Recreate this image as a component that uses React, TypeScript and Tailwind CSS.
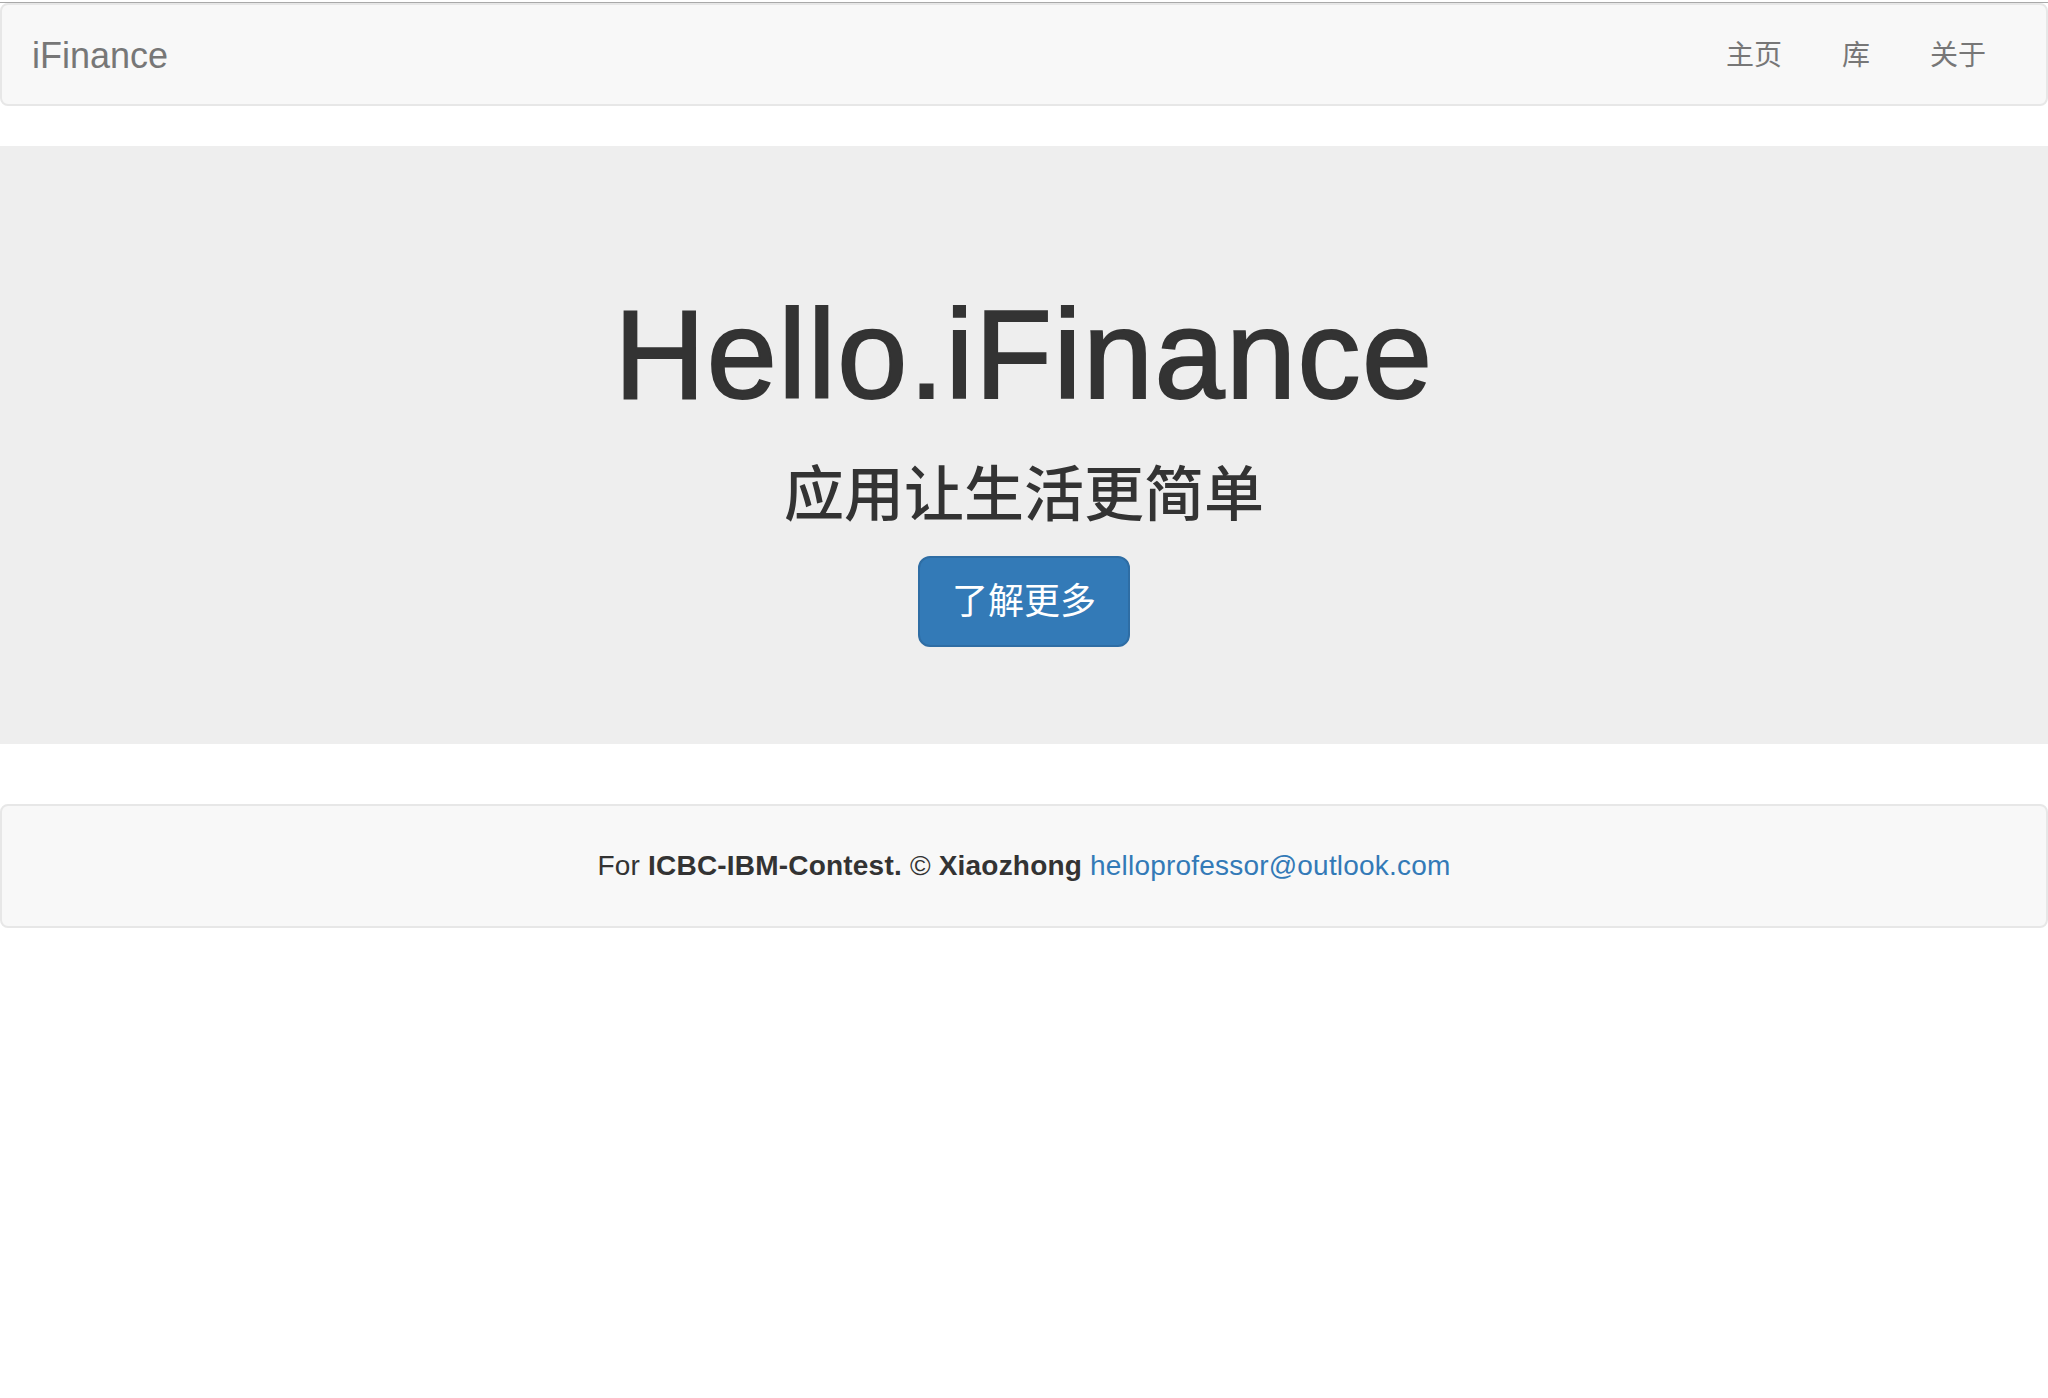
import React from 'react';

// Top navigation links
const navLinks = ['主页', '库', '关于'];

const fontStack = "font-['Liberation_Sans','Noto_Sans_CJK_SC',sans-serif]";

const App: React.FC = () => {
  return (
    <div className={`min-h-[1398px] w-full bg-white text-[#333] ${fontStack}`}>
      {/* Window top line */}
      <div className="pt-[2px]">
        <div className="h-px bg-[#a9a9a9]" />
      </div>

      {/* Navbar */}
      <nav className="h-[103px] pt-[2px] border-2 border-[#e7e7e7] rounded-[8px] bg-[#f8f8f8] flex items-center justify-between pl-[30px] pr-[30px]">
        <a className="text-[36px] leading-[40px] text-[#777]">iFinance</a>
        <ul className="flex items-center">
          {navLinks.map(link => (
            <li key={link}>
              <a className="block px-[30px] text-[28px] leading-[40px] text-[#777]">{link}</a>
            </li>
          ))}
        </ul>
      </nav>

      {/* Jumbotron */}
      <section className="mt-[40px] bg-[#eee] pt-[139px] pb-[97px] flex flex-col items-center">
        <h1 className="text-[126px] leading-[139px] font-normal text-[#333] tracking-[1.5px] [-webkit-text-stroke:2px_#333]">
          Hello.iFinance
        </h1>
        <h2 className="mt-[39px] text-[60px] leading-[66px] font-medium text-[#333]">应用让生活更简单</h2>
        <button className="mt-[27px] w-[212px] h-[91px] rounded-[12px] border-2 border-[#2e6da4] bg-[#337ab7] text-white text-[36px] leading-[48px]">
          了解更多
        </button>
      </section>

      {/* Footer */}
      <footer className="mt-[60px] border-2 border-[#e7e7e7] rounded-[8px] bg-[#f8f8f8] py-[40px] text-center text-[28px] leading-[40px] tracking-[0.2px] text-[#333]">
        For <strong className="font-bold">ICBC-IBM-Contest.</strong> © <strong className="font-bold">Xiaozhong</strong>{' '}
        <a className="text-[#337ab7]">helloprofessor@outlook.com</a>
      </footer>
    </div>
  );
};

export default App;
